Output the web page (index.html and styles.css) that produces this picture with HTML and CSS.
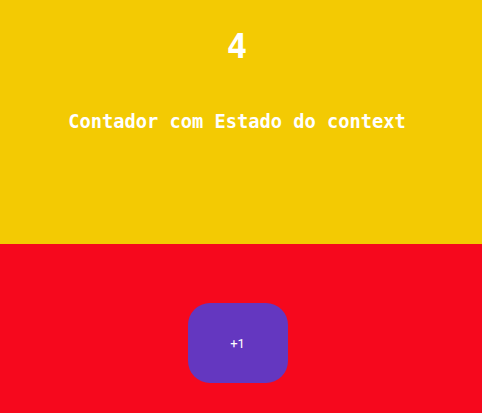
FILE: index.html
```html
<!DOCTYPE html>
<html>
<head>
<meta charset="utf-8">
<link rel="stylesheet" href="styles.css">
</head>
<body>
<div class="app">
  <div class="top">
    <div class="count">4</div>
    <div class="title">Contador com Estado do context</div>
  </div>
  <div class="bottom">
    <button class="btn">+1</button>
  </div>
</div>
</body>
</html>
```
FILE: styles.css
```css
html, body {
  margin: 0;
  padding: 0;
  width: 482px;
  height: 413px;
  overflow: hidden;
}
.app {
  display: flex;
  flex-direction: column;
  height: 413px;
}
.top {
  height: 244px;
  background: #f3ca03;
  display: flex;
  flex-direction: column;
  align-items: center;
  padding-right: 8px;
  color: #fff;
  font-family: "DejaVu Sans Mono", monospace;
  font-weight: bold;
}
.count {
  margin-top: 26px;
  font-size: 34px;
  line-height: 40px;
}
.title {
  margin-top: 44px;
  font-size: 18.7px;
  line-height: 24px;
}
.bottom {
  flex: 1;
  background: #f6081d;
  display: flex;
  justify-content: center;
  align-items: flex-start;
  padding-top: 59px;
  padding-right: 7px;
}
.btn {
  width: 100px;
  height: 80px;
  border: none;
  border-radius: 22px;
  background: #6437c0;
  color: #fff;
  font-family: "Roboto", sans-serif;
  font-size: 13px;
  line-height: 16px;
  padding: 2px 0 0 0;
}
```
